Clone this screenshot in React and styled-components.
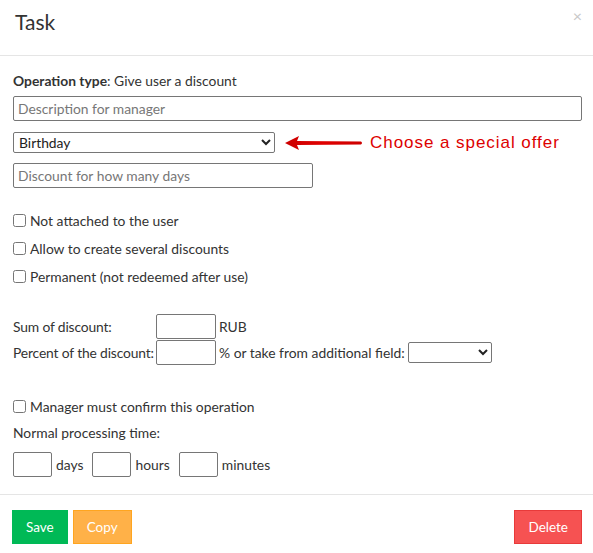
import styled, { createGlobalStyle } from "styled-components";

const Global = createGlobalStyle`
  html, body { margin: 0; padding: 0; background: #fff; }
  body {
    font-family: Lato, "Open Sans", "Liberation Sans", sans-serif;
    font-size: 13.85px;
    color: #333;
  }
  * { box-sizing: border-box; }
`;

const Modal = styled.div`
  width: 593px;
  height: 553px;
  display: flex;
  flex-direction: column;
  background: #fff;
  overflow: hidden;
`;

const Header = styled.div`
  flex: none;
  height: 56px;
  border-bottom: 1px solid #e5e5e5;
  display: flex;
  justify-content: space-between;
  align-items: flex-start;
  padding: 9px 15px 0 15px;
`;

const Title = styled.h4`
  margin: 0;
  font-size: 21px;
  font-weight: 400;
  color: #333;
`;

const Close = styled.span`
  font-size: 16px;
  color: #c8c8c8;
  margin-top: -3px;
  margin-right: -4px;
`;

const Body = styled.div`
  flex: 1;
  min-height: 0;
  padding: 16px 13px 0 13px;
  white-space: nowrap;
`;

const Line = styled.div`
  line-height: 17px;
  margin-bottom: 7px;
`;

const Bold = styled.b`
  font-weight: 700;
`;

const TextInput = styled.input`
  display: block;
  width: ${(p) => p.$w}px;
  height: 25px;
  border: 1px solid #767676;
  border-radius: 2px;
  padding: 0 4px;
  font: inherit;
  color: #333;
  margin-bottom: ${(p) => p.$mb || 0}px;
  &::placeholder { color: #777; }
`;

const SelectRow = styled.div`
  display: flex;
  align-items: center;
  margin-bottom: 10px;
`;

const Select = styled.select`
  width: ${(p) => p.$w}px;
  height: 21px;
  border: 1px solid #767676;
  border-radius: 2px;
  font: inherit;
  color: #222;
  padding: 0 1px;
  background: #fff;
`;

const Hint = styled.span`
  display: flex;
  align-items: center;
  margin-left: 10px;
  font-family: "Liberation Sans", Arial, sans-serif;
  font-size: 17px;
  letter-spacing: 0.95px;
  color: #dd0000;
  gap: 7px;
`;

const CheckGroup = styled.div`
  margin-top: 24px;
  display: flex;
  flex-direction: column;
  gap: 11px;
`;

const CheckRow = styled.label`
  display: flex;
  align-items: center;
  height: 17px;
  gap: 4px;
  input {
    margin: 0;
    width: 13px;
    height: 13px;
  }
`;

const Grid = styled.div`
  margin-top: 29px;
  display: grid;
  grid-template-columns: 143px auto;
  row-gap: 1px;
  align-items: center;
`;

const Label = styled.span`
  letter-spacing: -0.15px;
`;

const Cell = styled.div`
  display: flex;
  align-items: center;
  gap: 3px;
`;

const SmallInput = styled.input`
  width: ${(p) => p.$w || 60}px;
  height: 25px;
  border: 1px solid #767676;
  border-radius: 2px;
  font: inherit;
  padding: 0 3px;
`;

const Confirm = styled.div`
  margin-top: 33px;
`;

const TimeLabel = styled.div`
  margin-top: 9px;
  line-height: 17px;
`;

const TimeRow = styled.div`
  display: flex;
  align-items: center;
  margin-top: 11px;
  gap: 4px;
  span { margin-right: 5px; }
`;

const Footer = styled.div`
  flex: none;
  height: 59px;
  border-top: 1px solid #e5e5e5;
  display: flex;
  align-items: flex-start;
  padding: 15px 11px 0 12px;
  gap: 5px;
`;

const Button = styled.button`
  height: 34px;
  padding: 0 13px;
  font: inherit;
  font-size: 13.5px;
  color: #fff;
  background: ${(p) => p.$bg};
  border: 1px solid ${(p) => p.$border};
  border-radius: 0;
  margin-left: ${(p) => (p.$right ? "auto" : 0)};
`;

function Arrow() {
  return (
    <svg width="78" height="16" viewBox="0 0 78 16">
      <defs>
        <linearGradient id="ag" x1="0" x2="1">
          <stop offset="0" stopColor="#cc0000" />
          <stop offset="0.5" stopColor="#e00000" />
          <stop offset="1" stopColor="#cc0000" />
        </linearGradient>
      </defs>
      <path d="M0 8 L14 1 L12 6 L76 6.5 Q78 8 76 9.5 L12 10 L14 15 Z" fill="url(#ag)" />
    </svg>
  );
}

export default function App() {
  return (
    <>
      <Global />
      <Modal>
        <Header>
          <Title>Task</Title>
          <Close>×</Close>
        </Header>
        <Body>
          <Line>
            <Bold>Operation type</Bold>: Give user a discount
          </Line>
          <TextInput $w={569} $mb={11} placeholder="Description for manager" />
          <SelectRow>
            <Select $w={262}>
              <option>Birthday</option>
            </Select>
            <Hint>
              <Arrow />
              Choose a special offer
            </Hint>
          </SelectRow>
          <TextInput $w={300} placeholder="Discount for how many days" />
          <CheckGroup>
            <CheckRow><input type="checkbox" />Not attached to the user</CheckRow>
            <CheckRow><input type="checkbox" />Allow to create several discounts</CheckRow>
            <CheckRow><input type="checkbox" />Permanent (not redeemed after use)</CheckRow>
          </CheckGroup>
          <Grid>
            <Label>Sum of discount:</Label>
            <Cell><SmallInput />RUB</Cell>
            <Label>Percent of the discount:</Label>
            <Cell>
              <SmallInput />% or take from additional field:
              <Select $w={84}><option></option></Select>
            </Cell>
          </Grid>
          <Confirm>
            <CheckRow><input type="checkbox" />Manager must confirm this operation</CheckRow>
          </Confirm>
          <TimeLabel>Normal processing time:</TimeLabel>
          <TimeRow>
            <SmallInput $w={39} /><span>days</span>
            <SmallInput $w={39} /><span>hours</span>
            <SmallInput $w={39} /><span>minutes</span>
          </TimeRow>
        </Body>
        <Footer>
          <Button $bg="#00b956" $border="#00b956">Save</Button>
          <Button $bg="#ffb148" $border="#ffa51f">Copy</Button>
          <Button $bg="#f65252" $border="#e83a3a" $right>Delete</Button>
        </Footer>
      </Modal>
    </>
  );
}
